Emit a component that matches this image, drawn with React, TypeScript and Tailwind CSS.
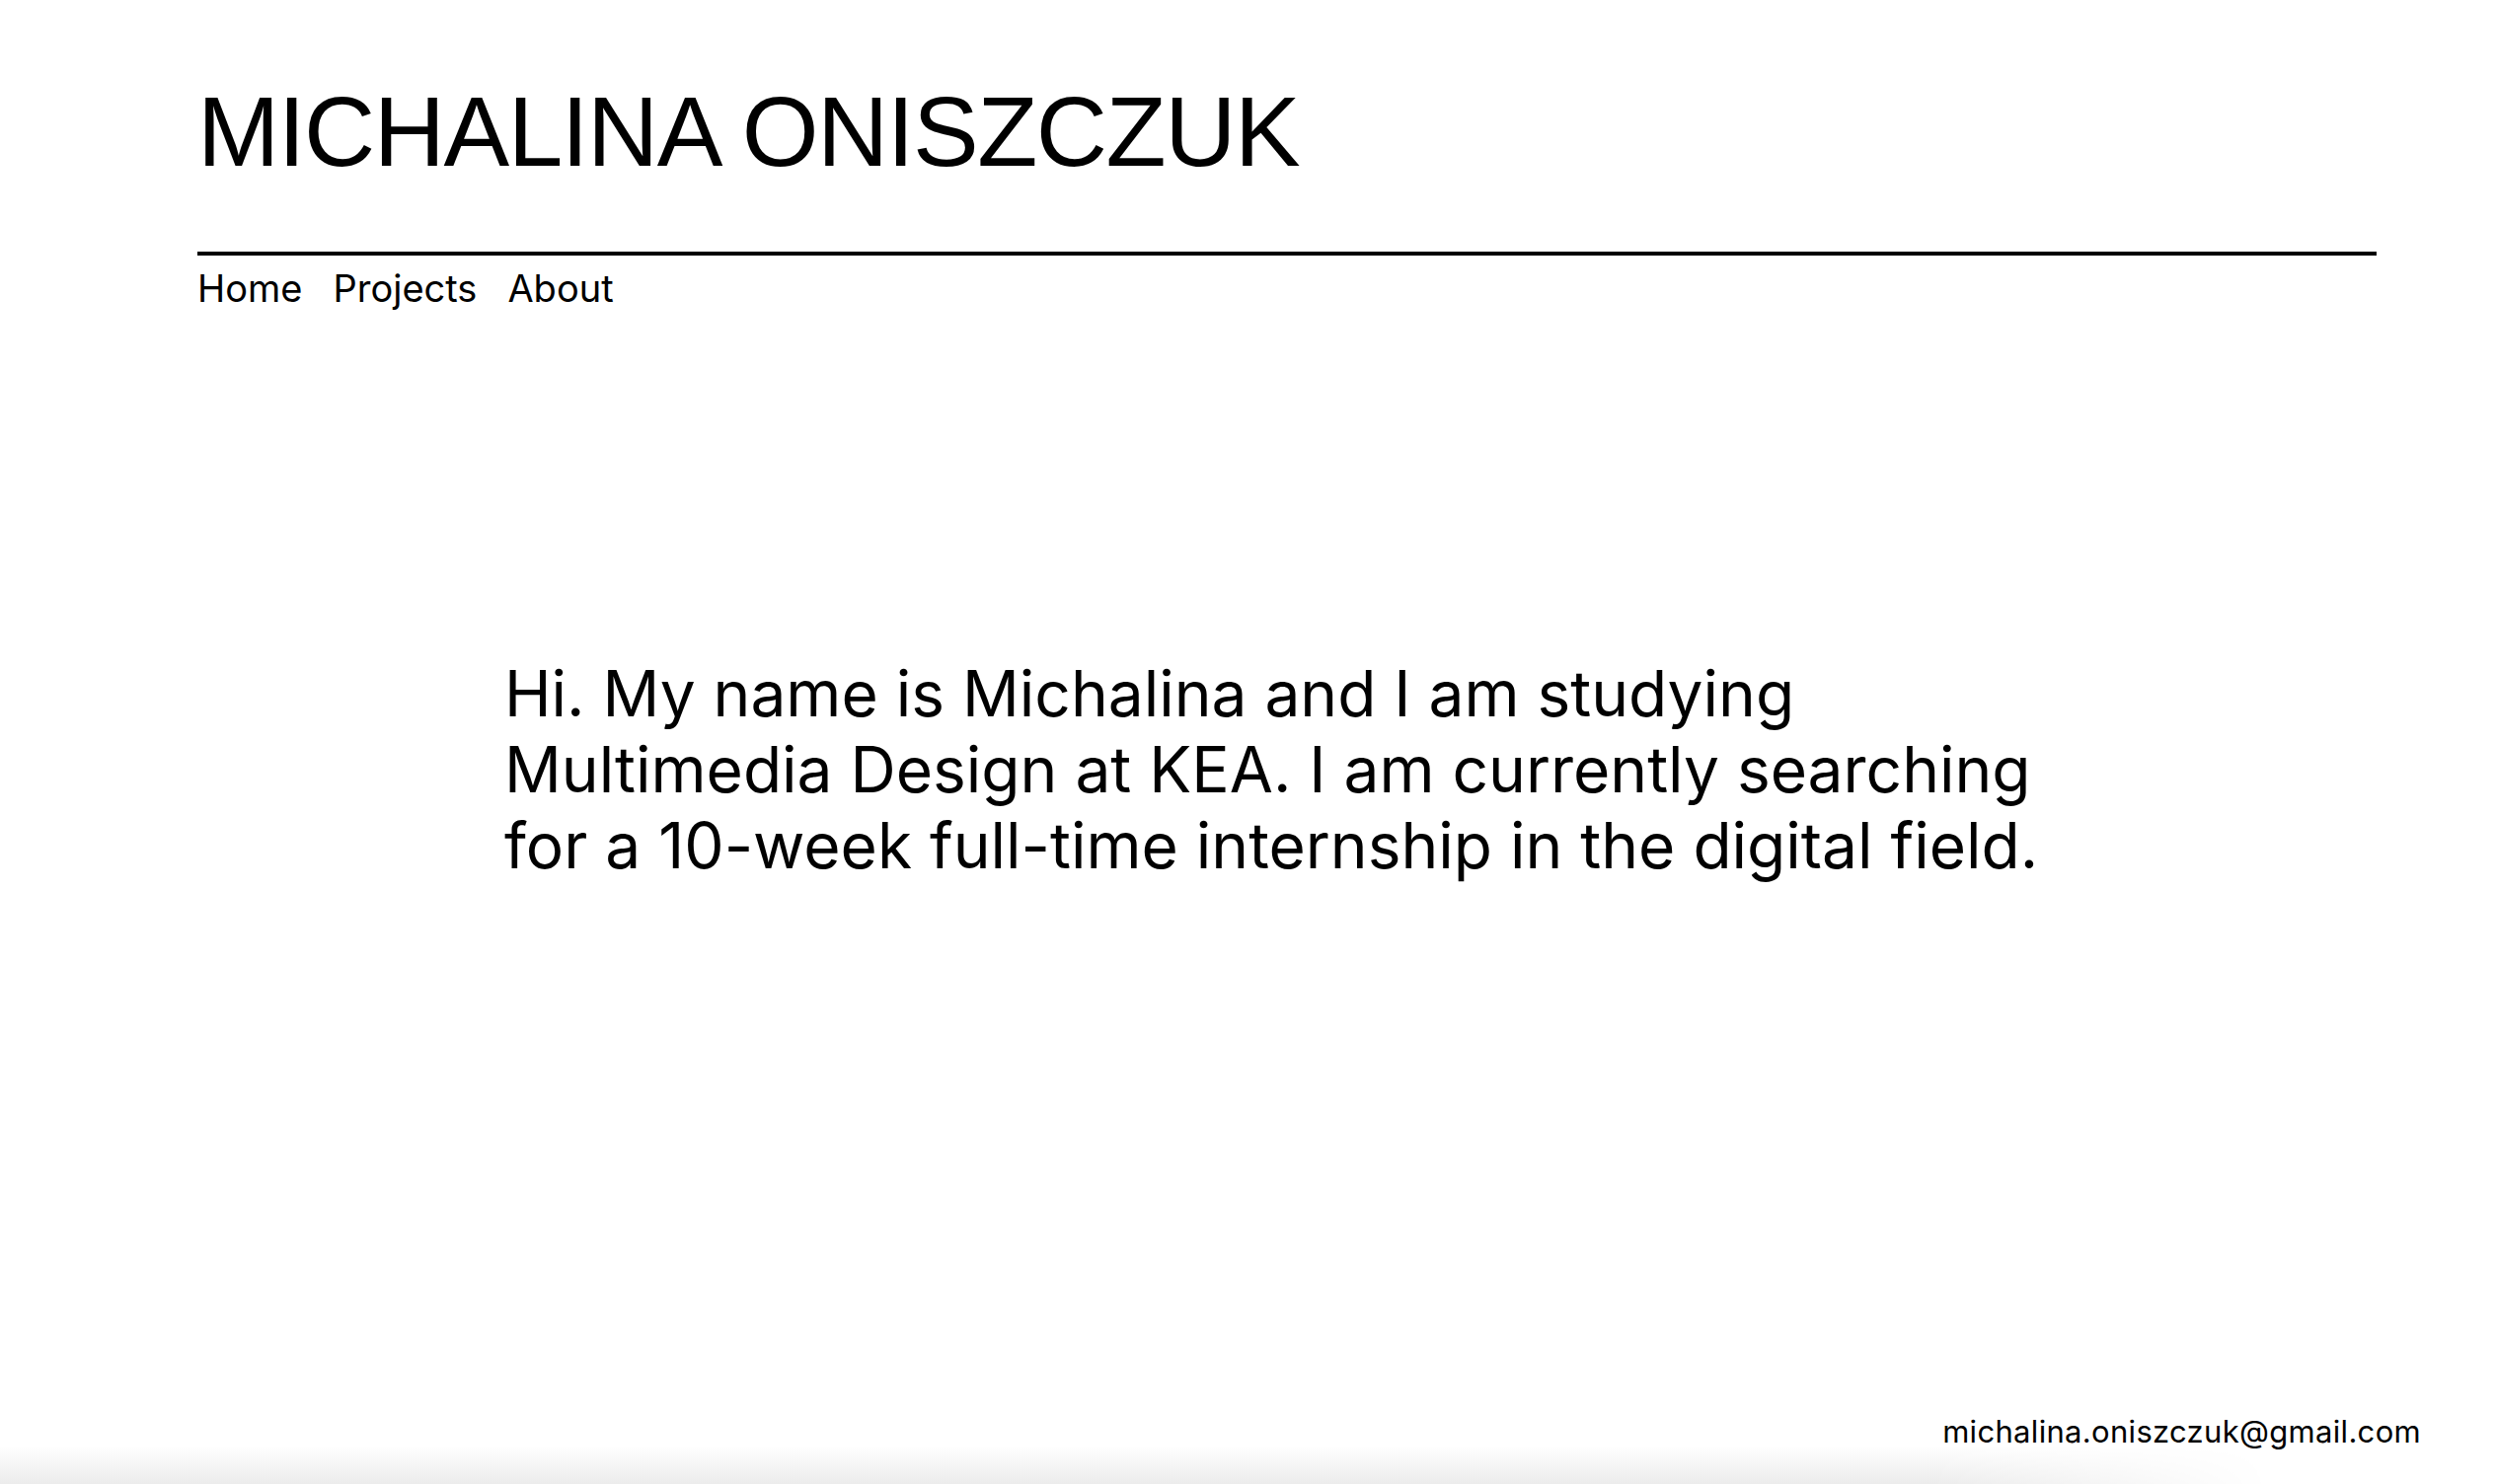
const links = ["Home", "Projects", "About"];

export default function App() {
  return (
    <div className="relative flex h-[1504px] w-full flex-col overflow-hidden bg-white text-black font-['Inter',sans-serif]">
      <header className="pl-[200px] pr-[120px]">
        <h1 className="mt-[83px] font-['Liberation_Sans',Arial,sans-serif] text-[100px] font-normal leading-none tracking-[-0.015em]">
          MICHALINA ONISZCZUK
        </h1>
        <div className="mt-[72px] h-[4px] w-full bg-black" />
        <nav className="mt-[14px] flex gap-[31px] text-[38px] leading-none">
          {links.map((l) => (
            <a key={l} href="#" className="text-black">
              {l}
            </a>
          ))}
        </nav>
      </header>

      <main className="pl-[511px]">
        <p className="mt-[353px] max-w-[1580px] text-[64px] leading-[77px]">
          Hi. My name is Michalina and I am studying Multimedia Design at KEA. I am
          currently searching for a 10-week full-time internship in the digital field.
        </p>
      </main>

      <footer className="mt-auto flex justify-end pr-[75px]">
        <span className="text-[31px] leading-none tracking-[0.01em]">michalina.oniszczuk@gmail.com</span>
      </footer>
      <div className="h-[38px] w-[2300px] bg-[linear-gradient(to_bottom,#ffffff,#ececec)] [mask-image:linear-gradient(to_right,black_85%,transparent)]" />
    </div>
  );
}
